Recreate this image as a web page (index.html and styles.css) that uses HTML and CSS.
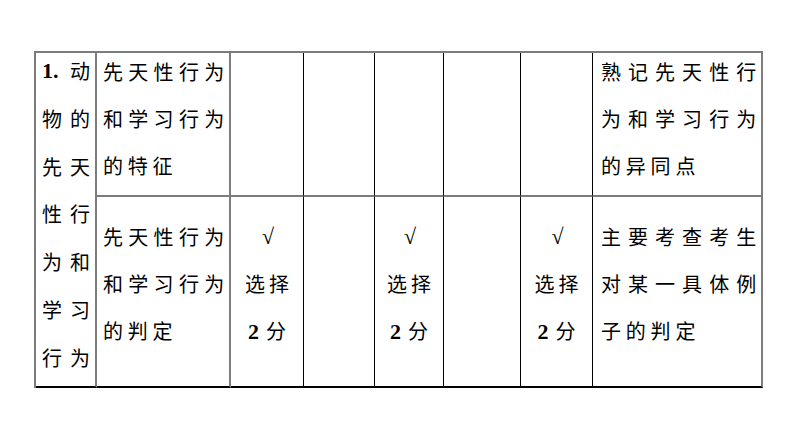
FILE: index.html
```html
<!DOCTYPE html>
<html lang="zh">
<head>
<meta charset="utf-8">
<link rel="stylesheet" href="styles.css">
</head>
<body>
<table class="grid">
  <colgroup>
    <col class="w1"><col class="w2"><col class="w3"><col class="w4"><col class="w5"><col class="w6"><col class="w7"><col class="w8">
  </colgroup>
  <tr class="r1">
    <td rowspan="2" class="c1 gr bb">
      <div class="stack">
        <div class="ln"><span class="num">1.</span><span>动</span></div>
        <div class="ln"><span>物</span><span>的</span></div>
        <div class="ln"><span>先</span><span>天</span></div>
        <div class="ln"><span>性</span><span>行</span></div>
        <div class="ln"><span>为</span><span>和</span></div>
        <div class="ln"><span>学</span><span>习</span></div>
        <div class="ln"><span>行</span><span>为</span></div>
      </div>
    </td>
    <td class="txt gr gb"><div class="para">先天性行为和学习行为的特征</div></td>
    <td class="kr gb"></td>
    <td class="kr gb"></td>
    <td class="kr gb"></td>
    <td class="kr gb"></td>
    <td class="kr gb"></td>
    <td class="txt wide gr gb"><div class="para">熟记先天性行为和学习行为的异同点</div></td>
  </tr>
  <tr class="r2">
    <td class="txt gr bb low"><div class="para">先天性行为和学习行为的判定</div></td>
    <td class="mark kr bb low"><div class="para"><div class="chk">√</div><div>选择</div><div><b class="num sc">2</b>分</div></div></td>
    <td class="kr bb"></td>
    <td class="mark kr bb low"><div class="para"><div class="chk">√</div><div>选择</div><div><b class="num sc">2</b>分</div></div></td>
    <td class="kr bb"></td>
    <td class="mark kr bb low"><div class="para"><div class="chk">√</div><div>选择</div><div><b class="num sc">2</b>分</div></div></td>
    <td class="txt wide gr bb low"><div class="para">主要考查考生对某一具体例子的判定</div></td>
  </tr>
</table>
</body>
</html>
```

FILE: styles.css
```css
html, body {
  margin: 0;
  padding: 0;
  background: #ffffff;
}
body {
  width: 794px;
  height: 447px;
  overflow: hidden;
  font-family: "Noto Sans CJK SC", "Liberation Serif", serif;
  color: #000;
}
.grid {
  margin: 51px 0 0 34px;
  border-collapse: separate;
  border-spacing: 0;
  table-layout: fixed;
  width: 729px;
  border-top: 2px solid #7c7c7c;
  border-left: 2px solid #7c7c7c;
}
.w1 { width: 61px; }
.w2 { width: 134px; }
.w3 { width: 73px; }
.w4 { width: 71px; }
.w5 { width: 69px; }
.w6 { width: 77px; }
.w7 { width: 72px; }
.w8 { width: 170px; }
.grid td {
  padding: 0;
  vertical-align: top;
  font-size: 20px;
  line-height: 47px;
  box-sizing: border-box;
}
.r1 td { height: 144px; }
.r2 td { height: 191px; }
.gr { border-right: 2px solid #7c7c7c; }
.kr { border-right: 1px solid #000; }
.gb { border-bottom: 2px solid #7c7c7c; }
.bb { border-bottom: 2px solid #000; }
.c1 { padding: 0 5px 0 6px !important; }
.stack { margin-top: -6px; line-height: 47.8px; }
.ln {
  display: flex;
  justify-content: space-between;
}
.num {
  font-family: "Liberation Serif", serif;
  font-weight: bold;
  font-size: 22px;
}
.txt { padding: 0 0 0 6px !important; }
.txt.wide { padding: 0 0 0 8px !important; }
.para {
  margin-top: -5px;
  letter-spacing: 4.8px;
  text-align: justify;
}
.low .para { margin-top: 16px; }
.mark .para {
  text-align: center;
  letter-spacing: 4px;
  padding-left: 4px;
}
.sc { margin-right: 3px; }
.chk {
  font-family: "Liberation Serif", serif;
  font-size: 22px;
  letter-spacing: 0;
  margin-left: -2px;
}
```
